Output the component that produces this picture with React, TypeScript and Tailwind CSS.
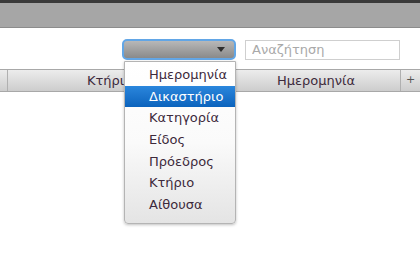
import { useState } from "react";

const options = [
  "Ημερομηνία",
  "Δικαστήριο",
  "Κατηγορία",
  "Είδος",
  "Πρόεδρος",
  "Κτήριο",
  "Αίθουσα",
];

export default function App() {
  const [selected, setSelected] = useState(1);

  return (
    <div className="w-[420px] h-[266px] bg-white overflow-hidden font-['DejaVu_Sans',sans-serif] text-[13px]">
      {/* window top */}
      <div className="h-[3px] bg-[#3a3a3a]" />
      <div className="h-[25px] bg-[#a6a6a6] border-b border-[#8c8c8c]" />

      {/* toolbar */}
      <div className="flex justify-end items-center gap-[9px] pr-[20px] pt-[11px]">
        <div className="relative">
          <div className="w-[114px] h-[21px] rounded-[5px] border-2 border-[#62a6e6] bg-gradient-to-b from-[#b8b8b8] to-[#8a8a8a] flex items-center justify-end pr-[9px]">
            <svg width="8" height="5" viewBox="0 0 8 5">
              <path d="M0 0H8L4 5Z" fill="#2e2e2e" />
            </svg>
          </div>

          {/* popup list */}
          <div className="absolute left-[2px] top-[22px] w-[112px] z-10 pt-[2px] pb-[7px] bg-gradient-to-b from-white via-[#fafafa] to-[#e4e4e4] border border-[#b4b4b4] rounded-b-[4px] shadow-[0_1px_3px_rgba(0,0,0,0.25)]">
            {options.map((o, i) => (
              <div
                key={o}
                onMouseDown={() => setSelected(i)}
                className={
                  i === selected
                    ? "h-[21.67px] flex items-center pl-[24px] text-white bg-gradient-to-b from-[#2a86dc] to-[#0a63bd]"
                    : "h-[21.67px] flex items-center pl-[24px] text-[#3d2a3c]"
                }
              >
                {o}
              </div>
            ))}
          </div>
        </div>
        <input
          placeholder="Αναζήτηση"
          className="w-[155px] h-[20px] border border-[#cfcfcf] px-[6px] text-[13px] text-[#333] placeholder:text-[#a9a9a9] outline-none font-['DejaVu_Sans',sans-serif]"
        />
      </div>

      {/* table header */}
      <div className="mt-[9px] h-[23px] flex border-y border-[#a8a8a8] bg-gradient-to-b from-[#ececec] to-[#cdcdcd] text-[#3d2a3c]">
        <div className="w-[8px] border-r border-[#b0b0b0]" />
        <div className="w-[204px] flex items-center justify-center border-r border-[#b0b0b0]">
          Κτήριο
        </div>
        <div className="w-[20px] border-r border-[#b0b0b0]" />
        <div className="flex-1 flex items-center justify-center border-r border-[#b0b0b0]">
          Ημερομηνία
        </div>
        <div className="w-[19px] flex items-center justify-center text-[#555] text-[11px]">
          +
        </div>
      </div>
    </div>
  );
}
